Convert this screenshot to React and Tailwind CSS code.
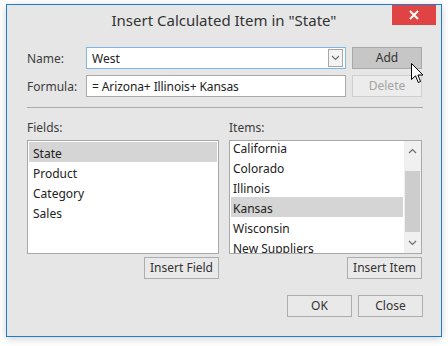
import React from 'react';

const font = { fontFamily: '"Noto Sans", "Open Sans", sans-serif' };

function Btn({ children, className = '', disabled }) {
	return (
		<div
			className={`flex items-center justify-center h-[22px] border text-[12px] ${
				disabled ? 'border-[#cfcfcf] bg-[#ececec] text-[#a3a3a3]' : 'border-[#adadad] bg-[#e9e9e9] text-[#333]'
			} ${className}`}
		>
			{children}
		</div>
	);
}

function Chevron({ up }) {
	return (
		<svg width="9" height="6" viewBox="0 0 9 6">
			<polyline
				points={up ? '1,5 4.5,1.5 8,5' : '1,1 4.5,4.5 8,1'}
				fill="none"
				stroke="#6d6d6d"
				strokeWidth="1.2"
			/>
		</svg>
	);
}

export default function App() {
	const fields = ['State', 'Product', 'Category', 'Sales'];
	const items = ['California', 'Colorado', 'Illinois', 'Kansas', 'Wisconsin', 'New Suppliers'];

	return (
		<div className="w-[448px] h-[346px] bg-white pt-[4px] pl-[6px]" style={font}>
			<div className="relative w-[436px] h-[333px] border border-[#1a7fd4] bg-[#e6e6e6] shadow-[0_2px_8px_rgba(0,0,0,0.18)]">
				{/* title bar */}
				<div className="relative h-[28px] flex items-center justify-center">
					<span className="text-[15px] text-[#333] pt-[2px]">Insert Calculated Item in "State"</span>
					<div className="absolute top-0 right-[5px] w-[44px] h-[20px] bg-[#e04343] flex items-center justify-center">
						<svg width="10" height="10" viewBox="0 0 10 10">
							<path d="M1 1L9 9M9 1L1 9" stroke="white" strokeWidth="2" />
						</svg>
					</div>
				</div>

				<div className="pl-[20px] pr-[18px] pt-[14px] text-[12px] text-[#3c3c3c]">
					{/* name row */}
					<div className="flex items-center h-[22px]">
						<span className="w-[59px] pt-[1px]">Name:</span>
						<div className="w-[260px] h-[22px] border border-[#7fb6ea] bg-white flex items-center pl-[5px] pr-[2px]">
							<span className="flex-1 text-[#222] pt-[1px]">West</span>
							<div className="w-[15px] h-[18px] border border-[#a7a7a7] bg-[#f4f4f4] flex items-center justify-center">
								<Chevron />
							</div>
						</div>
						<Btn className="ml-[6px] w-[70px] !bg-[#c6c6c6] !border-[#a8a8a8]">Add</Btn>
					</div>
					{/* formula row */}
					<div className="flex items-center h-[22px] mt-[6px]">
						<span className="w-[59px] pt-[1px]">Formula:</span>
						<div className="w-[260px] h-[22px] border border-[#a9a9a9] bg-white flex items-center pl-[5px] pt-[1px] text-[#222] tracking-[-0.1px]">
							= Arizona+ Illinois+ Kansas
						</div>
						<Btn disabled className="ml-[6px] w-[70px]">Delete</Btn>
					</div>

					<div className="mt-[10px] h-px bg-[#a9a9a9]" />

					<div className="flex gap-[10px] mt-[12px]">
						{/* fields */}
						<div className="w-[192px] flex flex-col">
							<span className="h-[20px] leading-[16px]">Fields:</span>
							<div className="h-[114px] border border-[#a9a9a9] bg-white pt-[1px] px-[1px]">
								{fields.map((f, i) => (
									<div
										key={f}
										className={`h-[20px] flex items-center pl-[4px] pt-[3px] text-[#222] ${i === 0 ? 'bg-[#d5d5d5]' : ''}`}
									>
										{f}
									</div>
								))}
							</div>
							<div className="flex justify-end mt-[3px]">
								<Btn className="w-[75px]">Insert Field</Btn>
							</div>
						</div>
						{/* items */}
						<div className="w-[193px] flex flex-col">
							<span className="h-[20px] leading-[16px]">Items:</span>
							<div className="h-[114px] border border-[#a9a9a9] bg-white flex overflow-hidden">
								<div className="flex-1 overflow-hidden px-[1px]">
									<div className="-mt-[4px]">
										{items.map((f) => (
											<div
												key={f}
												className={`h-[20px] flex items-center pl-[2px] pt-[3px] text-[#222] ${f === 'Kansas' ? 'bg-[#d5d5d5]' : ''}`}
											>
												{f}
											</div>
										))}
									</div>
								</div>
								<div className="w-[17px] bg-[#f0f0f0] flex flex-col">
									<div className="h-[20px] flex items-center justify-center">
										<Chevron up />
									</div>
									<div className="h-[10px]" />
									<div className="h-[61px] mx-[1px] bg-[#cdcdcd]" />
									<div className="flex-1 flex items-center justify-center">
										<Chevron />
									</div>
								</div>
							</div>
							<div className="flex justify-end mt-[3px]">
								<Btn className="w-[75px]">Insert Item</Btn>
							</div>
						</div>
					</div>

					<div className="flex justify-end gap-[6px] mt-[16px]">
						<Btn className="w-[65px]">OK</Btn>
						<Btn className="w-[65px]">Close</Btn>
					</div>
				</div>

				{/* mouse cursor */}
				<svg className="absolute left-[404px] top-[58px]" width="13" height="21" viewBox="0 0 13 21">
					<path d="M0.5 0.5 L0.5 16.5 L4.5 12.8 L7.3 19.5 L9.6 18.5 L6.9 12 L12 12 Z" fill="white" stroke="black" strokeWidth="1" />
				</svg>
			</div>
		</div>
	);
}
